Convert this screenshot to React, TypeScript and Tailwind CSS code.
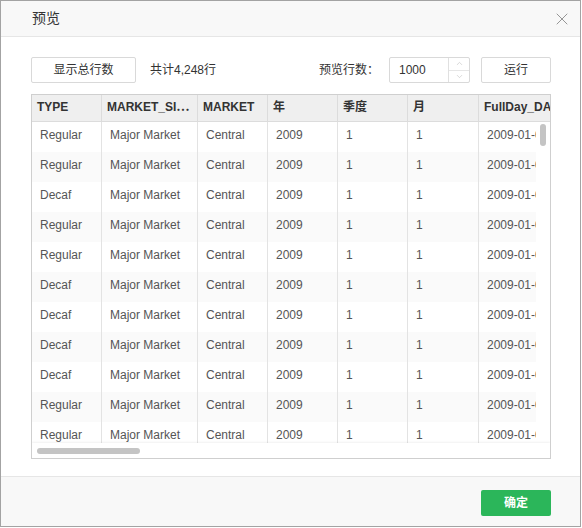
import { ChevronUp, ChevronDown, X } from 'lucide-react'

const FONT = "font-['Liberation_Sans','Noto_Sans_CJK_SC',sans-serif]"

const COLS = [
  { key: 'TYPE',        w: 'w-[70px]' },
  { key: 'MARKET_SI⋯',  w: 'w-[96px]' },
  { key: 'MARKET',      w: 'w-[70px]' },
  { key: '年',          w: 'w-[70px]' },
  { key: '季度',        w: 'w-[70px]' },
  { key: '月',          w: 'w-[71px]' },
  { key: 'FullDay_DA',  w: 'w-[110px]' },
]

const TYPES = ['Regular', 'Regular', 'Decaf', 'Regular', 'Regular', 'Decaf', 'Decaf', 'Decaf', 'Decaf', 'Regular', 'Regular']

export default function App() {
  return (
    <div className={`w-[582px] h-[528px] bg-white ${FONT}`}>
      <div className="w-[581px] h-[527px] border border-[#a3a3a3] flex flex-col">
        {/* Header */}
        <div className="h-[36px] shrink-0 bg-[#f8f8f8] border-b border-[#e6e6e6] flex items-center justify-between pl-[31px] pr-[8px]">
          <span className="text-[14px] text-[#333]">预览</span>
          <X size={20} strokeWidth={1.1} className="text-[#8c8c8c]" />
        </div>

        {/* Body */}
        <div className="flex-1 pl-[30px] pr-[29px] pt-[20px]">
          <div className="flex items-center h-[26px] text-[12px] text-[#333]">
            <button className="h-[26px] w-[105px] border border-[#d9d9d9] rounded-[2px] bg-white text-[12px] text-[#333]">
              显示总行数
            </button>
            <span className="ml-[14px]">共计4,248行</span>
            <span className="ml-auto">预览行数：</span>
            <div className="ml-[10px] h-[26px] w-[81px] border border-[#d9d9d9] rounded-[2px] flex">
              <span className="flex-1 pl-[9px] leading-[24px]">1000</span>
              <div className="w-[21px] border-l border-[#e0e0e0] flex flex-col">
                <div className="flex-1 flex items-center justify-center border-b border-[#e6e6e6]">
                  <ChevronUp size={9} strokeWidth={1.5} className="text-[#bdbdbd]" />
                </div>
                <div className="flex-1 flex items-center justify-center">
                  <ChevronDown size={9} strokeWidth={1.5} className="text-[#bdbdbd]" />
                </div>
              </div>
            </div>
            <button className="ml-[11px] h-[26px] w-[70px] border border-[#d9d9d9] rounded-[2px] bg-white text-[12px] text-[#333]">
              运行
            </button>
          </div>

          {/* Table */}
          <div className="mt-[11px] h-[365px] border border-[#cfcfcf] relative overflow-hidden text-[12px]">
            <div className="flex h-[27px] bg-[#efefef] border-b border-[#dcdcdc] whitespace-nowrap">
              {COLS.map((c, i) => (
                <div
                  key={c.key}
                  className={`${c.w} shrink-0 pl-[5px] leading-[24px] font-bold text-[#333] overflow-hidden ${i < COLS.length - 1 ? 'border-r border-[#dcdcdc]' : ''}`}
                >
                  {c.key}
                </div>
              ))}
            </div>
            <div className="relative h-[321px] overflow-hidden">
              {TYPES.map((t, r) => {
                const cells = [t, 'Major Market', 'Central', '2009', '1', '1', '2009-01-01']
                return (
                  <div key={r} className={`flex h-[30px] whitespace-nowrap ${r % 2 === 1 ? 'bg-[#fafafa]' : 'bg-white'}`}>
                    {cells.map((v, i) => (
                      <div
                        key={i}
                        className={`${COLS[i].w} shrink-0 pl-[8px] leading-[26px] text-[#555] overflow-hidden ${i < cells.length - 1 ? 'border-r border-[#e3e3e3]' : ''}`}
                      >
                        {v}
                      </div>
                    ))}
                  </div>
                )
              })}
              {/* vertical scrollbar */}
              <div className="absolute right-0 top-0 bottom-0 w-[14px] bg-white">
                <div className="mx-auto mt-[2px] w-[6px] h-[22px] rounded-full bg-[#c4c4c4]" />
              </div>
            </div>
            {/* horizontal scrollbar */}
            <div className="h-[15px] bg-white shadow-[0_-1px_2px_rgba(0,0,0,0.06)] relative">
              <div className="absolute left-[5px] top-[5px] w-[103px] h-[6px] rounded-full bg-[#c4c4c4]" />
            </div>
          </div>
        </div>

        {/* Footer */}
        <div className="h-[50px] shrink-0 bg-[#f8f8f8] border-t border-[#e6e6e6] flex items-center justify-end pr-[29px] pt-[3px]">
          <button className="h-[26px] w-[70px] rounded-[2px] bg-[#2bb65a] text-white text-[12px] font-bold">
            确定
          </button>
        </div>
      </div>
    </div>
  )
}
